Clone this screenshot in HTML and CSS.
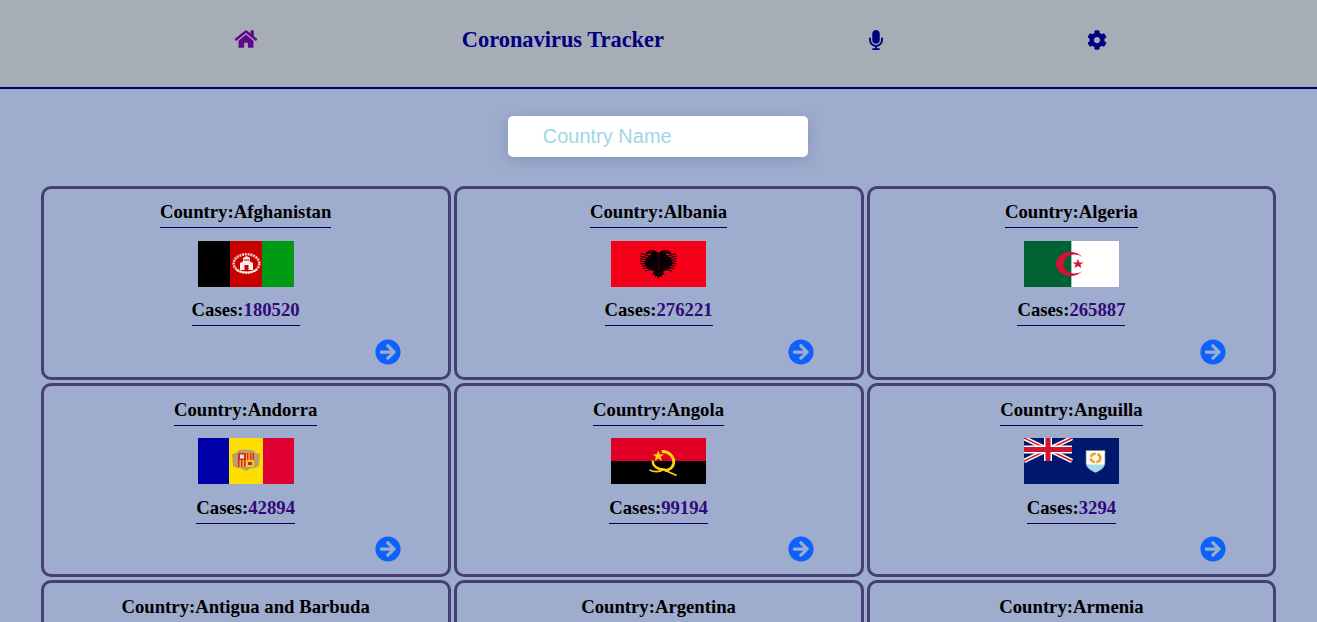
FILE: index.html
```html
<!DOCTYPE html>
<html lang="en">
<head>
<meta charset="utf-8">
<title>Coronavirus Tracker</title>
<link rel="stylesheet" href="styles.css">
</head>
<body>
<header class="topbar">
  <a class="nav-icon home" href="#"><svg viewBox="0 0 576 512" class="icon-home"><path d="M280.37 148.26L96 300.11V464a16 16 0 0 0 16 16l112.06-.29a16 16 0 0 0 15.92-16V368a16 16 0 0 1 16-16h64a16 16 0 0 1 16 16v95.64a16 16 0 0 0 16 16.05L464 480a16 16 0 0 0 16-16V300L295.67 148.26a12.19 12.19 0 0 0-15.3 0zM571.6 251.47L488 182.56V44.05a12 12 0 0 0-12-12h-56a12 12 0 0 0-12 12v72.61L318.47 43a48 48 0 0 0-61 0L4.34 251.47a12 12 0 0 0-1.6 16.9l25.5 31A12 12 0 0 0 45.15 301l235.22-193.74a12.19 12.19 0 0 1 15.3 0L530.9 301a12 12 0 0 0 16.9-1.6l25.5-31a12 12 0 0 0-1.7-16.93z"/></svg></a>
  <h1 class="brand">Coronavirus Tracker</h1>
  <a class="nav-icon mic" href="#"><svg viewBox="0 0 352 512" class="icon-mic"><path d="M176 352c53.02 0 96-42.98 96-96V96c0-53.02-42.98-96-96-96S80 42.98 80 96v160c0 53.02 42.98 96 96 96zm160-160h-16c-8.84 0-16 7.16-16 16v48c0 74.8-64.49 134.82-140.79 127.38C96.71 376.89 48 317.11 48 250.3V208c0-8.84-7.16-16-16-16H16c-8.84 0-16 7.16-16 16v40.16c0 89.64 63.97 169.55 152 181.69V464H96c-8.84 0-16 7.16-16 16v16c0 8.84 7.16 16 16 16h160c8.84 0 16-7.16 16-16v-16c0-8.84-7.16-16-16-16h-56v-33.77C285.71 418.47 352 344.9 352 256v-48c0-8.84-7.16-16-16-16z"/></svg></a>
  <a class="nav-icon" href="#"><svg viewBox="0 0 512 512" class="icon-cog"><path d="M487.4 315.7l-42.6-24.6c4.3-23.2 4.3-47 0-70.2l42.6-24.6c4.9-2.8 7.1-8.6 5.5-14-11.1-35.6-30-67.8-54.7-94.6-3.8-4.1-10-5.1-14.8-2.3L380.8 110c-17.9-15.4-38.5-27.3-60.8-35.1V25.8c0-5.6-3.9-10.5-9.4-11.7-36.7-8.2-74.3-7.8-109.2 0-5.5 1.2-9.4 6.1-9.4 11.7V75c-22.2 7.9-42.8 19.8-60.8 35.1L88.7 85.5c-4.9-2.8-11-1.9-14.8 2.3-24.7 26.7-43.6 58.9-54.7 94.6-1.7 5.4.6 11.2 5.5 14L67.3 221c-4.3 23.2-4.3 47 0 70.2l-42.6 24.6c-4.9 2.8-7.1 8.6-5.5 14 11.1 35.6 30 67.8 54.7 94.6 3.8 4.1 10 5.1 14.8 2.3l42.6-24.6c17.9 15.4 38.5 27.3 60.8 35.1v49.2c0 5.6 3.9 10.5 9.4 11.7 36.7 8.2 74.3 7.8 109.2 0 5.5-1.2 9.4-6.1 9.4-11.7v-49.2c22.2-7.9 42.8-19.8 60.8-35.1l42.6 24.6c4.9 2.8 11 1.9 14.8-2.3 24.7-26.7 43.6-58.9 54.7-94.6 1.5-5.5-.7-11.3-5.6-14.1zM256 336c-44.1 0-80-35.9-80-80s35.9-80 80-80 80 35.9 80 80-35.9 80-80 80z"/></svg></a>
</header>

<main class="content">
  <div class="search-row"><input class="search" type="text" placeholder="Country Name"></div>

  <svg class="defs" aria-hidden="true">
    <defs>
      <symbol id="go" viewBox="0 0 512 512"><path d="M256 8c137 0 248 111 248 248S393 504 256 504 8 393 8 256 119 8 256 8zm-28.9 143.6l75.5 72.4H120c-13.3 0-24 10.7-24 24v16c0 13.3 10.7 24 24 24h182.6l-75.5 72.4c-9.7 9.3-9.9 24.8-.4 34.3l11 10.9c9.4 9.4 24.6 9.4 33.9 0L404.3 273c9.4-9.4 9.4-24.6 0-33.9L271.6 106.3c-9.4-9.4-24.6-9.4-33.9 0l-11 10.9c-9.3 9.6-9.1 25.1.4 34.4z"/></symbol>
      <g id="eagle-half">
        <path d="M47.500 12L44 9.500L39 9L35.500 11L34 13.500L37 13L39 12.500L40.500 13.500L37 15L41 18L44 19L47.500 20Z" fill="#0a0004"/>
        <path d="M43 16L36 16L33 22L37 28L44 31Z" fill="#0a0004"/>
        <path d="M38 15L30 12.500M38 17L29 15M37 19L29 17.500M36 21L29 20M36 23L29.500 22.500M36 25L30.500 25M37 27L32 27.500M38 29L34 30" stroke="#0a0004" stroke-width="1.100" fill="none"/>
        <path d="M47.500 16L42 18L43 30L45 32L47.500 32Z" fill="#0a0004"/>
        <path d="M47.500 30L43 31L41 34L44 33.500L44 36L46 35L47.500 38Z" fill="#0a0004"/>
        <rect x="39.500" y="10.500" width="1.500" height="1" fill="#f50018"/>
      </g>
    </defs>
  </svg>

  <section class="grid">
    <article class="card">
      <h3 class="line">Country:Afghanistan</h3>
      <svg class="flag wide" viewBox="0 0 96 46">
        <rect width="32" height="46" fill="#000"/><rect x="32" width="32" height="46" fill="#c90000"/><rect x="64" width="32" height="46" fill="#009a15"/>
        <ellipse cx="48.500" cy="22.500" rx="12.800" ry="9.300" fill="none" stroke="#f3c9c4" stroke-width="2.600" stroke-dasharray="2 .8"/>
        <path d="M42 29h13v-7l-3-1.500v-3.500l-3.500-2-3.500 2v3.500l-3 1.500z" fill="#fbeeee"/>
        <path d="M46.500 29v-5h4v5zM45.500 18.500h6v1h-6z" fill="#c90000"/>
        <path d="M38 29q10.500 5 21 0" fill="none" stroke="#fbeeee" stroke-width="1.300"/>
      </svg>
      <h3 class="line">Cases:<span class="num">180520</span></h3>
      <a class="go" href="#"><svg class="go-icon"><use href="#go"/></svg></a>
    </article>

    <article class="card">
      <h3 class="line">Country:Albania</h3>
      <svg class="flag" viewBox="0 0 95 46">
        <rect width="95" height="46" fill="#f50018"/>
        <use href="#eagle-half"/>
        <use href="#eagle-half" transform="matrix(-1 0 0 1 95 0)"/>
      </svg>
      <h3 class="line">Cases:<span class="num">276221</span></h3>
      <a class="go" href="#"><svg class="go-icon"><use href="#go"/></svg></a>
    </article>

    <article class="card">
      <h3 class="line">Country:Algeria</h3>
      <svg class="flag" viewBox="0 0 95 46">
        <rect width="47.500" height="46" fill="#006233"/><rect x="47.500" width="47.500" height="46" fill="#fff"/>
        <path d="M58 15.700A14.500 12 0 1 0 58 30.300A11.300 9.500 0 1 1 58 15.700Z" fill="#d80f36"/>
        <path d="M54 18L55.400 21.400L59.700 21.500L56.300 23.600L57.500 27L54 25L50.500 27L51.700 23.600L48.300 21.500L52.600 21.400Z" fill="#d80f36"/>
      </svg>
      <h3 class="line">Cases:<span class="num">265887</span></h3>
      <a class="go" href="#"><svg class="go-icon"><use href="#go"/></svg></a>
    </article>

    <article class="card">
      <h3 class="line">Country:Andorra</h3>
      <svg class="flag wide" viewBox="0 0 96 46">
        <rect width="31" height="46" fill="#0000a8"/><rect x="31" width="35" height="46" fill="#fedf00"/><rect x="65" width="31" height="46" fill="#df0034"/>
        <path d="M34 16l4-1 3-3 7-0.500 7 .500 3 3 4 1-1 12-4 2-4 .500-5 2.500-5-2.500-4-.500-4-2z" fill="#b9a264"/>
        <rect x="40" y="15" width="16" height="14" fill="#f0c020"/>
        <rect x="40" y="15" width="8" height="7" fill="#d8233a"/><rect x="42" y="16.500" width="4" height="4" fill="#f7e8a0"/>
        <path d="M49 15h1.500v7H49zM52 15h1.500v7H52zM54.500 15H56v7h-1.500zM40 22h1.500v7H40zM43 22h1.500v7H43zM46 22h1.500v7H46z" fill="#d8233a"/>
        <rect x="48" y="22" width="8" height="7" fill="#f3c32a"/><rect x="50" y="24" width="4" height="3" fill="#b8301c"/>
      </svg>
      <h3 class="line">Cases:<span class="num">42894</span></h3>
      <a class="go" href="#"><svg class="go-icon"><use href="#go"/></svg></a>
    </article>

    <article class="card">
      <h3 class="line">Country:Angola</h3>
      <svg class="flag" viewBox="0 0 95 46">
        <rect width="95" height="23" fill="#e00025"/><rect y="23" width="95" height="23" fill="#000"/>
        <path d="M50.700 13.500C58 13 64 19 62.500 26C61.500 30 58 32 54 32.500" fill="none" stroke="#fdd20c" stroke-width="3"/>
        <path d="M42 22.500C41 28 47 32 54 31.500" fill="none" stroke="#fdd20c" stroke-width="2.400"/>
        <path d="M38.500 32C43 34 48 34 52 32" fill="none" stroke="#fdd20c" stroke-width="1.800"/>
        <path d="M52 31.500L65.700 37.500" stroke="#fdd20c" stroke-width="1.500"/>
        <path d="M47.300 12.500L48.800 16.200L53 16.400L49.700 18.800L51 23L47.300 20.500L43.600 23L44.900 18.800L41.600 16.400L45.800 16.200Z" fill="#fdd20c"/>
      </svg>
      <h3 class="line">Cases:<span class="num">99194</span></h3>
      <a class="go" href="#"><svg class="go-icon"><use href="#go"/></svg></a>
    </article>

    <article class="card">
      <h3 class="line">Country:Anguilla</h3>
      <svg class="flag" viewBox="0 0 95 46">
        <rect width="95" height="46" fill="#00186e"/>
        <path d="M0 0l48 23M48 0L0 23" stroke="#fff" stroke-width="4.500"/>
        <path d="M0 0l48 23M48 0L0 23" stroke="#cf142b" stroke-width="1.500"/>
        <path d="M24 0v23M0 11.500h48" stroke="#fff" stroke-width="8"/>
        <path d="M24 0v23M0 11.500h48" stroke="#cf142b" stroke-width="5"/>
        <path d="M62 12.500h19v12c0 5-5 8-9.500 10-4.500-2-9.500-5-9.500-10z" fill="#fff" stroke="#5f8a80" stroke-width=".7"/>
        <path d="M62.500 26.500h18c-1 4-5 6-9 7.800-4-1.800-8-3.800-9-7.800z" fill="#a8d8ee"/>
        <ellipse cx="71.500" cy="20" rx="4.800" ry="4.200" fill="none" stroke="#f7a01a" stroke-width="2.600" stroke-dasharray="6 1.500"/>
      </svg>
      <h3 class="line">Cases:<span class="num">3294</span></h3>
      <a class="go" href="#"><svg class="go-icon"><use href="#go"/></svg></a>
    </article>

    <article class="card">
      <h3 class="line">Country:Antigua and Barbuda</h3>
      <svg class="flag wide" viewBox="0 0 96 46"><rect width="96" height="46" fill="#ce1126"/><path d="M0 0h96L48 46z" fill="#0072c6"/><path d="M0 0h96L72 23H24z" fill="#000"/></svg>
      <h3 class="line">Cases:<span class="num">1</span></h3>
      <a class="go" href="#"><svg class="go-icon"><use href="#go"/></svg></a>
    </article>

    <article class="card">
      <h3 class="line">Country:Argentina</h3>
      <svg class="flag" viewBox="0 0 95 46"><rect width="95" height="46" fill="#74acdf"/><rect y="15" width="95" height="16" fill="#fff"/></svg>
      <h3 class="line">Cases:<span class="num">1</span></h3>
      <a class="go" href="#"><svg class="go-icon"><use href="#go"/></svg></a>
    </article>

    <article class="card">
      <h3 class="line">Country:Armenia</h3>
      <svg class="flag" viewBox="0 0 95 46"><rect width="95" height="16" fill="#d90012"/><rect y="15" width="95" height="16" fill="#0033a0"/><rect y="31" width="95" height="15" fill="#f2a800"/></svg>
      <h3 class="line">Cases:<span class="num">1</span></h3>
      <a class="go" href="#"><svg class="go-icon"><use href="#go"/></svg></a>
    </article>
  </section>
</main>
</body>
</html>
```
FILE: styles.css
```css
html, body {
  height: 100%;
  overflow: hidden;
}
body {
  margin: 0;
  background: #9eacce;
  font-family: "Liberation Serif", "Times New Roman", serif;
  color: #000;
}
.topbar {
  display: flex;
  align-items: center;
  height: 79px;
  padding: 0 0 8px 234.3px;
  gap: 203.5px;
  background: #a7adb7;
  border-bottom: 2px solid #000080;
}
.nav-icon {
  display: flex;
  color: #000080;
}
.nav-icon svg {
  display: block;
  fill: currentColor;
}
.home {
  color: #5e0a8e;
  margin-top: -2px;
}
.mic {
  margin: 0 -0.7px 0 0.7px;
}
.icon-home { width: 24px; height: 20px; }
.icon-mic { width: 16px; height: 20px; }
.icon-cog { width: 20px; height: 20px; }
.brand {
  margin: 0;
  font-size: 22.4px;
  font-weight: 700;
  color: #000080;
}
.search-row {
  display: flex;
  justify-content: center;
  padding: 27px 1.5px 0 0;
}
.search {
  width: 300px;
  height: 41px;
  box-sizing: border-box;
  padding: 0 35px;
  border: 0;
  border-radius: 5px;
  background: #fff;
  font: 20px "Liberation Sans", Arial, sans-serif;
  box-shadow: 0 3px 14px rgba(110, 125, 165, 0.5);
  outline: none;
}
.search::placeholder {
  color: #a2d5e2;
  opacity: 1;
}
.defs {
  position: absolute;
  width: 0;
  height: 0;
}
.grid {
  display: grid;
  grid-template-columns: repeat(3, 1fr);
  gap: 3px;
  margin: 29px 40.6px 0 40.7px;
}
.card {
  display: flex;
  flex-direction: column;
  align-items: center;
  height: 194.2px;
  box-sizing: border-box;
  padding-top: 12.45px;
  border: 3px solid #453f74;
  border-radius: 10px;
}
.line {
  margin: 0;
  padding-bottom: 4px;
  border-bottom: 1px solid #00005f;
  font-size: 18.72px;
  font-weight: 700;
}
.num {
  color: #310a78;
}
.flag {
  display: block;
  width: 95px;
  height: 46px;
  margin: 12.8px 0 12.2px;
}
.flag.wide {
  width: 96px;
}
.go {
  display: flex;
  align-self: flex-end;
  margin: 12.8px 47px 0 0;
}
.go-icon {
  display: block;
  width: 26px;
  height: 26px;
  fill: #0d62fb;
}
```
